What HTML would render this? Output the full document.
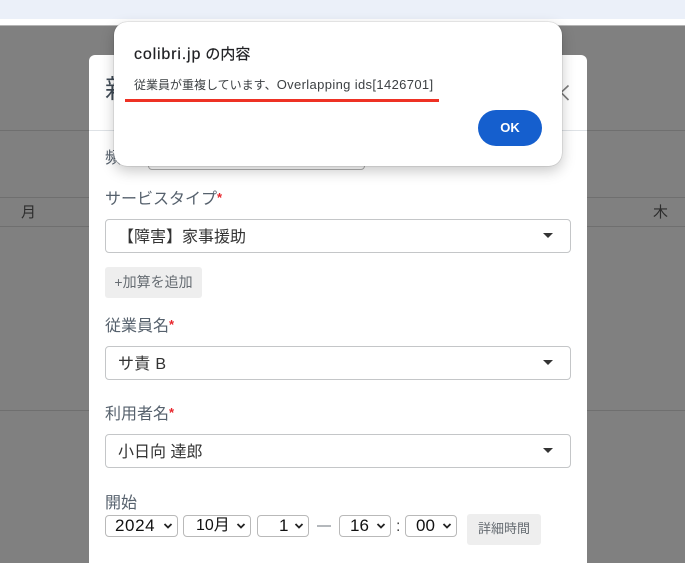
<!DOCTYPE html>
<html lang="ja"><head><meta charset="utf-8">
<style>
*{box-sizing:border-box}
html,body{margin:0;padding:0;width:685px;height:563px;overflow:hidden}
body{position:relative;background:#808080;font-family:"Liberation Sans","Noto Sans CJK JP",sans-serif}
.a{position:absolute}
.t{position:absolute;white-space:nowrap;line-height:1}
.hl{position:absolute;left:0;width:685px;height:1px;background:#6f6f6f}
.lb{position:absolute;left:105px;font-size:16px;color:#56616d;white-space:nowrap;line-height:20px}
.lb b{color:#e8252b;font-weight:700;font-size:13px;position:relative;top:-2px}
.sel{position:absolute;left:105px;width:466px;height:34px;background:#fff;border:1px solid #c4c6c8;border-radius:4px;font-size:16px;color:#333;line-height:35px;white-space:nowrap}
.sel:after{content:"";position:absolute;right:17px;top:13px;border-left:5px solid transparent;border-right:5px solid transparent;border-top:5px solid #343434}
.ms{position:absolute;top:515px;height:22px;background:#fff;border:1px solid #b9b9b9;border-radius:4px;font-size:17px;color:#111;line-height:20px;white-space:nowrap}
.ms svg{position:absolute;right:4px;top:6px}
.btn{position:absolute;background:#eeeeee;border-radius:3px;color:#666c72;font-size:13px;text-align:center;white-space:nowrap}
</style></head><body>
<div class="a" style="left:0;top:0;width:685px;height:19px;background:#ebf0f9"></div>
<div class="a" style="left:0;top:19px;width:685px;height:6px;background:#fff"></div>
<div class="a" style="left:0;top:25px;width:685px;height:1px;background:#b5b5b5"></div>
<div class="hl" style="top:130px"></div>
<div class="hl" style="top:197px"></div>
<div class="hl" style="top:226px"></div>
<div class="hl" style="top:410px"></div>
<div class="t" style="left:21px;top:205px;font-size:15px;color:#2d2d2d">月</div>
<div class="t" style="left:653px;top:205px;font-size:15px;color:#2d2d2d">木</div>

<div class="a" style="left:89px;top:55px;width:498px;height:508px;background:#fff;border-radius:6px 6px 0 0"></div>
<div class="a" style="left:89px;top:130px;width:498px;height:1px;background:#dee2e6"></div>
<div class="t" style="left:105px;top:76px;font-size:26px;color:#3f4a56">新</div>
<svg class="a" style="left:558px;top:84px" width="14" height="18" viewBox="0 0 14 18"><path d="M10.500 1.500 L3 8.500 L10.500 16" fill="none" stroke="#7c7c7c" stroke-width="1.600"/></svg>
<div class="t" style="left:105px;top:151px;font-size:16px;color:#56616d">頻</div>
<div class="a" style="left:148px;top:150px;width:217px;height:20px;background:#fff;border:1px solid #b0b0b0;border-radius:4px"></div>

<div class="lb" style="top:190px">サービスタイプ<b>*</b></div>
<div class="sel" style="top:219px;padding-left:12px">【障害】家事援助</div>
<div class="btn" style="left:105px;top:267px;width:97px;height:31px;line-height:31px;font-size:14px">+加算を追加</div>
<div class="lb" style="top:317px">従業員名<b>*</b></div>
<div class="sel" style="top:346px;padding-left:12px;letter-spacing:.3px">サ責 B</div>
<div class="lb" style="top:405px">利用者名<b>*</b></div>
<div class="sel" style="top:434px;padding-left:12px">小日向 達郎</div>
<div class="lb" style="top:494px">開始</div>

<div class="ms" style="left:105px;width:73px;padding-left:9px;letter-spacing:.6px">2024<svg width="10" height="8" viewBox="0 0 10 8"><path d="M1.500 2 L5 5.500 L8.500 2" fill="none" stroke="#222" stroke-width="1.800"/></svg></div>
<div class="ms" style="left:183px;width:68px;padding-left:12px;font-size:16px">10月<svg width="10" height="8" viewBox="0 0 10 8"><path d="M1.500 2 L5 5.500 L8.500 2" fill="none" stroke="#222" stroke-width="1.800"/></svg></div>
<div class="ms" style="left:257px;width:52px;padding-left:21px">1<svg width="10" height="8" viewBox="0 0 10 8"><path d="M1.500 2 L5 5.500 L8.500 2" fill="none" stroke="#222" stroke-width="1.800"/></svg></div>
<div class="a" style="left:317px;top:525px;width:14px;height:2px;background:#b4b8bc"></div>
<div class="ms" style="left:339px;width:52px;padding-left:10px">16<svg width="10" height="8" viewBox="0 0 10 8"><path d="M1.500 2 L5 5.500 L8.500 2" fill="none" stroke="#222" stroke-width="1.800"/></svg></div>
<div class="t" style="left:396px;top:519px;font-size:16px;color:#444">:</div>
<div class="ms" style="left:405px;width:52px;padding-left:10px">00<svg width="10" height="8" viewBox="0 0 10 8"><path d="M1.500 2 L5 5.500 L8.500 2" fill="none" stroke="#222" stroke-width="1.800"/></svg></div>
<div class="btn" style="left:467px;top:514px;width:74px;height:31px;line-height:30px">詳細時間</div>

<div class="a" style="left:114px;top:22px;width:448px;height:144px;background:#fff;border-radius:13px;box-shadow:0 0 1px rgba(0,0,0,.45),0 5px 14px rgba(0,0,0,.22)"></div>
<div class="t" style="left:134px;top:47px;font-size:15px;color:#202124;-webkit-text-stroke:.2px #202124"><span style="font-size:16px;letter-spacing:.85px">colibri.jp</span> の内容</div>
<div class="t" style="left:134px;top:78px;font-size:12px;color:#3c4043">従業員が重複しています、<span style="font-size:13px;letter-spacing:.36px">Overlapping ids[1426701]</span></div>
<div class="a" style="left:125px;top:99px;width:314px;height:3px;background:#ee3124"></div>
<div class="a" style="left:478px;top:110px;width:64px;height:36px;background:#155fce;border-radius:18px;color:#fff;font-size:13px;font-weight:700;text-align:center;line-height:36px">OK</div>
</body></html>
